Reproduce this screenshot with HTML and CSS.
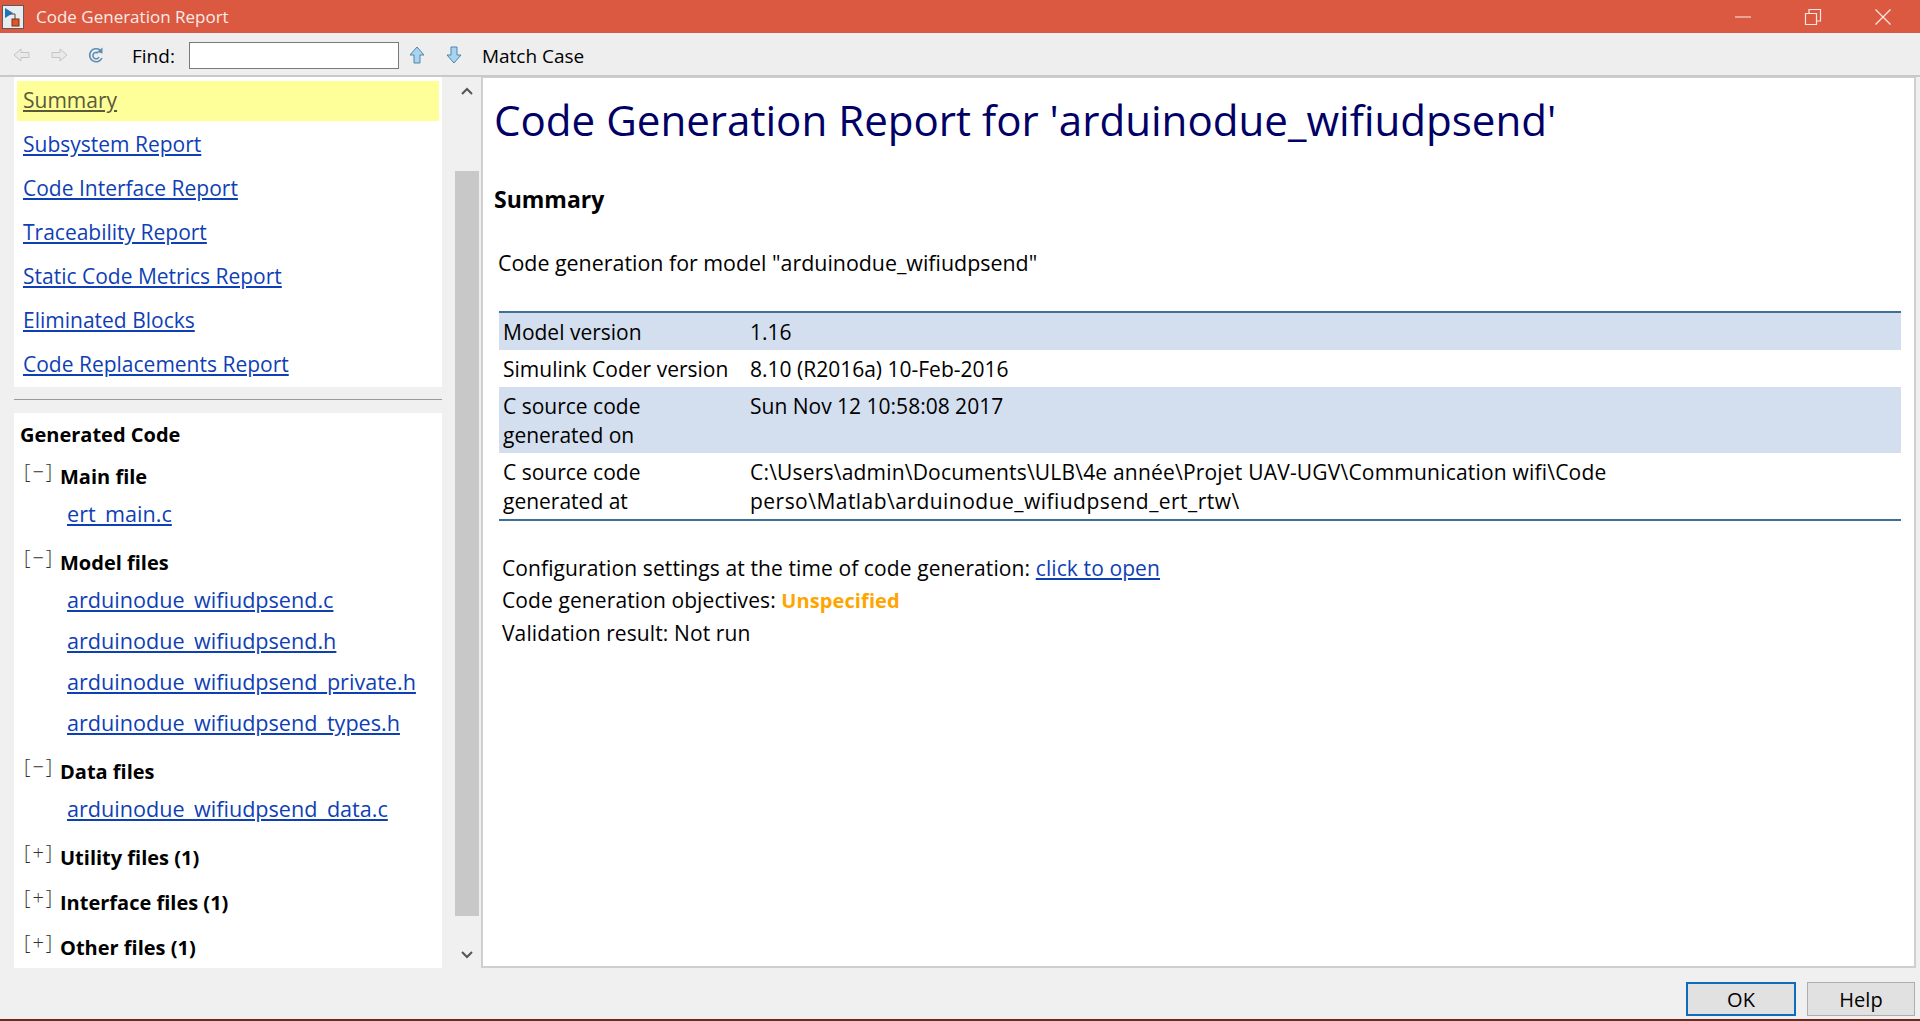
FILE: index.html
```html
<!DOCTYPE html>
<html lang="en">
<head>
  <meta charset="UTF-8" />
  <title>Code Generation Report</title>
  <link rel="stylesheet" href="styles.css">
</head>
<body>
  <div class="title-bar">
    <svg class="app-icon" width="22" height="24" viewBox="0 0 22 24">
      <rect x="0.5" y="0.5" width="21" height="23" fill="#e8ecef" stroke="#5a5a5a"/>
      <path d="M3 3 L11 8 L3 13 Z" fill="#1f74b8"/>
      <path d="M8 9 H13 V14" fill="none" stroke="#444" stroke-width="1"/>
      <rect x="10" y="14" width="7" height="7" fill="#d9572f" stroke="#7a2c14"/>
    </svg>
    <span class="title-text">Code Generation Report</span>
    <div class="window-buttons">
      <svg width="18" height="18" viewBox="0 0 18 18"><path d="M1 9 H17" stroke="#f7d9d2" stroke-width="1.2"/></svg>
      <svg width="18" height="18" viewBox="0 0 18 18"><path d="M1.5 5.5 H12.5 V16.5 H1.5 Z M5 5 V1.5 H16.5 V13 H13" fill="none" stroke="#fbe6e1" stroke-width="1.2"/></svg>
      <svg width="18" height="18" viewBox="0 0 18 18"><path d="M1.5 1.5 L16.5 16.5 M16.5 1.5 L1.5 16.5" stroke="#fbe6e1" stroke-width="1.3"/></svg>
    </div>
  </div>

  <div class="toolbar">
    <svg class="tool-icon" width="18" height="16" viewBox="0 0 18 16"><path d="M1 8 L8 2 V5.5 H16 V10.5 H8 V14 Z" fill="#e9e9e9" stroke="#c4c4c4"/></svg>
    <svg class="tool-icon" width="18" height="16" viewBox="0 0 18 16"><path d="M17 8 L10 2 V5.5 H2 V10.5 H10 V14 Z" fill="#e9e9e9" stroke="#c4c4c4"/></svg>
    <svg class="tool-icon" width="18" height="18" viewBox="0 0 18 18"><path d="M13 4 A6.5 6.5 0 1 0 15 12 M11 7 A3.2 3.2 0 1 0 12 11" fill="none" stroke="#5d8db3" stroke-width="1.6"/><path d="M10 6 L15.5 1.5 L15.5 7.5 Z" fill="#5d8db3"/></svg>
    <label class="find-label" for="find">Find:</label>
    <input class="find-input" id="find" type="text" />
    <svg class="arrow-icon" width="16" height="18" viewBox="0 0 16 18"><path d="M8 1 L15 9 H11 V17 H5 V9 H1 Z" fill="#a9d3ee" stroke="#4c86ad"/></svg>
    <svg class="arrow-icon" width="16" height="18" viewBox="0 0 16 18"><path d="M8 17 L15 9 H11 V1 H5 V9 H1 Z" fill="#a9d3ee" stroke="#4c86ad"/></svg>
    <span class="match-case">Match Case</span>
  </div>

  <div class="main">
    <div class="side">
      <div class="nav-box">
        <a class="nav-link current" href="#">Summary</a>
        <a class="nav-link" href="#">Subsystem Report</a>
        <a class="nav-link" href="#">Code Interface Report</a>
        <a class="nav-link" href="#">Traceability Report</a>
        <a class="nav-link" href="#">Static Code Metrics Report</a>
        <a class="nav-link" href="#">Eliminated Blocks</a>
        <a class="nav-link" href="#">Code Replacements Report</a>
      </div>
      <hr class="side-rule" />
      <div class="files-box">
        <div class="files-title">Generated Code</div>

        <div class="group"><span class="toggle">[−]</span><b>Main file</b></div>
        <div class="file-list"><a href="#">ert_main.c</a></div>

        <div class="group"><span class="toggle">[−]</span><b>Model files</b></div>
        <div class="file-list">
          <a href="#">arduinodue_wifiudpsend.c</a>
          <a href="#">arduinodue_wifiudpsend.h</a>
          <a href="#">arduinodue_wifiudpsend_private.h</a>
          <a href="#">arduinodue_wifiudpsend_types.h</a>
        </div>

        <div class="group"><span class="toggle">[−]</span><b>Data files</b></div>
        <div class="file-list"><a href="#">arduinodue_wifiudpsend_data.c</a></div>

        <div class="group closed"><span class="toggle">[+]</span><b>Utility files (1)</b></div>
        <div class="group closed"><span class="toggle">[+]</span><b>Interface files (1)</b></div>
        <div class="group closed"><span class="toggle">[+]</span><b>Other files (1)</b></div>
      </div>
    </div>

    <div class="scrollbar">
      <svg width="14" height="10" viewBox="0 0 14 10"><path d="M2 8 L7 3 L12 8" fill="none" stroke="#555" stroke-width="2"/></svg>
      <div class="thumb"></div>
      <svg width="14" height="10" viewBox="0 0 14 10"><path d="M2 2 L7 7 L12 2" fill="none" stroke="#555" stroke-width="2"/></svg>
    </div>

    <div class="report">
      <h1>Code Generation Report for 'arduinodue_wifiudpsend'</h1>
      <h2>Summary</h2>
      <p class="intro">Code generation for model "arduinodue_wifiudpsend"</p>
      <table class="info">
        <tr class="shade"><td class="key">Model version</td><td>1.16</td></tr>
        <tr><td class="key">Simulink Coder version</td><td>8.10 (R2016a) 10-Feb-2016</td></tr>
        <tr class="shade"><td class="key">C source code<br>generated on</td><td>Sun Nov 12 10:58:08 2017</td></tr>
        <tr><td class="key">C source code<br>generated at</td><td><span class="path">C:\Users\admin\Documents\ULB\4e année\Projet UAV-UGV\Communication wifi\Code</span><br><span class="path-end">perso\Matlab\arduinodue_wifiudpsend_ert_rtw\</span></td></tr>
      </table>
      <div class="notes">
        <div>Configuration settings at the time of code generation: <a href="#">click to open</a></div>
        <div>Code generation objectives: <b class="warn">Unspecified</b></div>
        <div>Validation result: Not run</div>
      </div>
    </div>
  </div>

  <div class="footer">
    <button class="btn default">OK</button>
    <button class="btn">Help</button>
  </div>
</body>
</html>
```

FILE: styles.css
```css
html, body {
  margin: 0;
  height: 1021px;
  overflow: hidden;
}

body {
  display: flex;
  flex-direction: column;
  background: #f0f0f0;
  font-family: "Open Sans", sans-serif;
  font-size: 21px;
  color: #000;
  border-bottom: 2px solid #6b2a1c;
  box-sizing: border-box;
}

b {
  font-size: 20px;
}

a {
  color: #0f3fb4;
}

.title-bar {
  height: 33px;
  flex: none;
  display: flex;
  align-items: center;
  background: #da5940;
  color: #fbeae6;
  padding-left: 2px;
}

.app-icon {
  margin-right: 12px;
}

.title-text {
  font-size: 17px;
}

.window-buttons {
  margin-left: auto;
  display: flex;
  gap: 52px;
  padding-right: 28px;
}

.toolbar {
  height: 40px;
  flex: none;
  margin-top: 2px;
  border-bottom: 2px solid #c9c9c9;
  display: flex;
  align-items: center;
  background: #eeeeee;
  padding-left: 13px;
}

.tool-icon {
  margin-right: 19px;
}

.find-label {
  margin-left: 8px;
  margin-right: 14px;
  padding-top: 2px;
  font-size: 19px;
}

.find-input {
  width: 208px;
  height: 25px;
  padding: 0;
  margin-right: 10px;
  border: 1px solid #7a7a7a;
  background: #fff;
}

.arrow-icon {
  margin-right: 21px;
}

.match-case {
  margin-left: -1px;
  padding-top: 2px;
  font-size: 19px;
}

.main {
  flex: 1;
  min-height: 0;
  display: flex;
  align-items: stretch;
}

.side {
  width: 428px;
  margin-left: 14px;
  display: flex;
  flex-direction: column;
}

.nav-box {
  background: #fff;
  height: 310px;
  padding: 4px 3px 0 3px;
  box-sizing: border-box;
}

.nav-link {
  display: block;
  height: 44px;
  line-height: 38px;
  padding-left: 6px;
  box-sizing: border-box;
}

.nav-link.current {
  height: 40px;
  margin-bottom: 4px;
  background: #ffff99;
  color: #5a5a3a;
}

.side-rule {
  margin: 12px 0 0;
  border: none;
  border-top: 1px solid #999;
  height: 13px;
}

.files-box {
  flex: 1;
  background: #fff;
  padding: 9px 6px 0;
  overflow: hidden;
}

.files-title {
  font-weight: 700;
  font-size: 20px;
  line-height: 26px;
}

.group {
  display: flex;
  align-items: baseline;
  margin-top: 15px;
  margin-left: 4px;
  line-height: 27px;
}

.group.closed {
  margin-top: 18px;
}

.toggle {
  width: 36px;
  flex: none;
  font-size: 20px;
  font-weight: 300;
  letter-spacing: 2px;
  position: relative;
  top: -5px;
  color: #333;
}

.file-list {
  margin-left: 47px;
  margin-top: 3px;
  font-size: 21.6px;
}

.file-list a {
  display: block;
  line-height: 41px;
}

.file-list + .group {
  margin-top: 15px;
}

.scrollbar {
  width: 24px;
  margin-left: 13px;
  display: flex;
  flex-direction: column;
  align-items: center;
  justify-content: space-between;
  padding: 9px 0 8px;
  box-sizing: border-box;
}

.thumb {
  width: 100%;
  height: 745px;
  margin-top: 48px;
  margin-bottom: 8px;
  background: #c8c8c8;
}

.report {
  flex: 1;
  margin: 0 4px 0 2px;
  background: #fff;
  border: 2px solid #cfcfcf;
  border-top-width: 1px;
  padding: 0 10px 0 11px;
  box-sizing: border-box;
}

h1 {
  margin: 10px 0 0;
  font-size: 42.1px;
  font-weight: 400;
  line-height: 64px;
  color: #000066;
}

h2 {
  margin: 31px 0 0;
  font-size: 23px;
  font-weight: 700;
  line-height: 32px;
}

.intro {
  margin: 32px 0 0 4px;
  font-size: 21.4px;
  line-height: 32px;
}

.info {
  width: 1402px;
  margin: 32px 0 0 5px;
  border-collapse: collapse;
  border-top: 2px solid #3f6f96;
  border-bottom: 2px solid #3f6f96;
  line-height: 29px;
}

.info td {
  padding: 5px 4px 3px;
  vertical-align: top;
}

.info .key {
  width: 239px;
}

.path {
  letter-spacing: 0.2px;
}

.path-end {
  letter-spacing: 0.47px;
}

.shade {
  background: #d3dfee;
}

.notes {
  margin: 31px 0 0 8px;
  letter-spacing: 0.1px;
  line-height: 32px;
}

.warn {
  color: #ffa500;
}

.footer {
  height: 51px;
  flex: none;
  display: flex;
  justify-content: flex-end;
  gap: 11px;
  padding: 14px 5px 0 0;
  box-sizing: border-box;
}

.btn {
  width: 108px;
  height: 34px;
  padding: 0;
  font-family: inherit;
  font-size: 20px;
  color: #000;
  background: #e1e1e1;
  border: 1px solid #adadad;
}

.btn.default {
  width: 110px;
  border: 2px solid #0f6cbd;
}
```
